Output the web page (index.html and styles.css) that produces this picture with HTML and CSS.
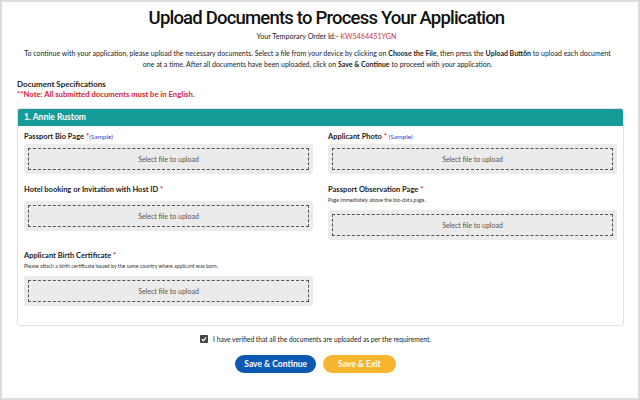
FILE: index.html
```html
<!DOCTYPE html>
<html lang="en">
<head>
    <meta charset="UTF-8">
    <meta name="viewport" content="width=device-width, initial-scale=1.0">
    <title>Upload Documents</title>
    <link rel="stylesheet" href="styles.css">
</head>
<body>
    <div class="frame">
        <h1>Upload Documents to Process Your Application</h1>
        <p class="order">Your Temporary Order Id:- <span class="order-id">KW5464451YGN</span></p>
        <p class="intro">
            <span class="line">To continue with your application, please upload the necessary documents. Select a file from your device by clicking on <b>Choose the File</b>, then press the <b>Upload Buttõn</b> to upload each document</span>
            <span class="line">one at a time. After all documents have been uploaded, click on <b>Save &amp; Continue</b> to proceed with your application.</span>
        </p>

        <div class="specs">Document Specifications</div>
        <div class="note">**Note: All submitted documents must be in English.</div>

        <div class="card">
            <div class="card-head">1. Annie Rustom</div>
            <div class="fields">
                <div class="field">
                    <div class="label">Passport Bio Page <span class="req">*</span><a class="sample" href="#">(Sample)</a></div>
                    <div class="upload first"><div class="drop">Select file to upload</div></div>
                </div>
                <div class="field">
                    <div class="label">Applicant Photo <span class="req">*</span> <a class="sample" href="#">(Sample)</a></div>
                    <div class="upload first"><div class="drop">Select file to upload</div></div>
                </div>
                <div class="field">
                    <div class="label">Hotel booking or Invitation with Host ID <span class="req">*</span></div>
                    <div class="upload"><div class="drop">Select file to upload</div></div>
                </div>
                <div class="field">
                    <div class="label">Passport Observation Page <span class="req">*</span></div>
                    <div class="desc">Page immediately above the bio-data page.</div>
                    <div class="upload"><div class="drop">Select file to upload</div></div>
                </div>
                <div class="field">
                    <div class="label">Applicant Birth Certificate <span class="req">*</span></div>
                    <div class="desc">Please attach a birth certificate issued by the same country where applicant was born.</div>
                    <div class="upload"><div class="drop">Select file to upload</div></div>
                </div>
            </div>
        </div>

        <label class="confirm">
            <span class="check">
                <svg viewBox="0 0 10 10" width="8" height="8"><path d="M2.2 5.2 L4.2 7.2 L7.8 3" fill="none" stroke="#fff" stroke-width="1.5"/></svg>
            </span>
            I have verified that all the documents are uploaded as per the requirement.
        </label>

        <div class="actions">
            <button class="btn btn-blue">Save &amp; Continue</button>
            <button class="btn btn-yellow">Save &amp; Exit</button>
        </div>
    </div>
</body>
</html>
```

FILE: styles.css
```css
body { margin: 0; background: #fff; font-family: Lato, "Open Sans", sans-serif; color: #222; }
.frame { height: 400px; box-sizing: border-box; border: 2px solid #dcdcdc; padding: 4px 14px 0 15px; }
h1 { margin: 0; padding-left: 12px; font-family: Roboto, "Liberation Sans", sans-serif; font-weight: 500; font-size: 18.5px; letter-spacing: -0.8px; line-height: 24px; text-align: center; color: #111; }
.order { margin: 2px 0 0; padding-left: 12px; font-size: 7.2px; line-height: 10px; text-align: center; }
.order-id { color: #d0343f; }
.intro { margin: 6px 0 0; padding-right: 6px; font-size: 7px; line-height: 11px; text-align: center; }
.intro .line { display: block; white-space: nowrap; }
.specs { margin-top: 9px; font-size: 8px; font-weight: 700; line-height: 10px; }
.note { font-size: 7.7px; font-weight: 700; line-height: 10px; color: #d9222f; }
.card { margin-top: 9px; border: 1px solid #e3e3e3; border-radius: 3px; padding-bottom: 19px; }
.card-head { background: #169c98; color: #fff; font-weight: 700; font-size: 8.5px; line-height: 17px; padding-left: 6px; border-radius: 2px 2px 0 0; }
.fields { display: grid; grid-template-columns: 1fr 1fr; column-gap: 15px; row-gap: 10px; padding: 5px 6px 0; align-items: start; }
.label { font-size: 7.5px; font-weight: 700; line-height: 12px; color: #1b1b1b; }
.req { color: #d9222f; }
.sample { color: #3b3bc9; font-weight: 400; font-size: 6.5px; text-decoration: none; }
.desc { font-size: 5.2px; line-height: 9px; color: #333; }
.upload { margin-top: 5px; background: #ebebeb; border-radius: 3px; padding: 4px; }
.upload.first { margin-top: 1px; }
.drop { border: 1px dashed #555; height: 20px; line-height: 20px; text-align: center; font-size: 7px; color: #555; }
.confirm { display: flex; align-items: center; justify-content: center; gap: 5px; margin-top: 7px; padding-right: 10px; font-size: 6.7px; line-height: 12px; color: #222; }
.check { width: 8px; height: 8px; background: #444; border-radius: 1px; display: flex; align-items: center; justify-content: center; }
.actions { display: flex; justify-content: center; gap: 7px; margin-top: 10px; padding-right: 10px; }
.btn { border: none; border-radius: 9px; height: 18px; padding: 0 9px; color: #fff; font-family: Lato, sans-serif; font-weight: 700; font-size: 8.5px; }
.btn-blue { background: #0c58b2; }
.btn-yellow { background: #f8b52e; padding: 0 15px; }
```
